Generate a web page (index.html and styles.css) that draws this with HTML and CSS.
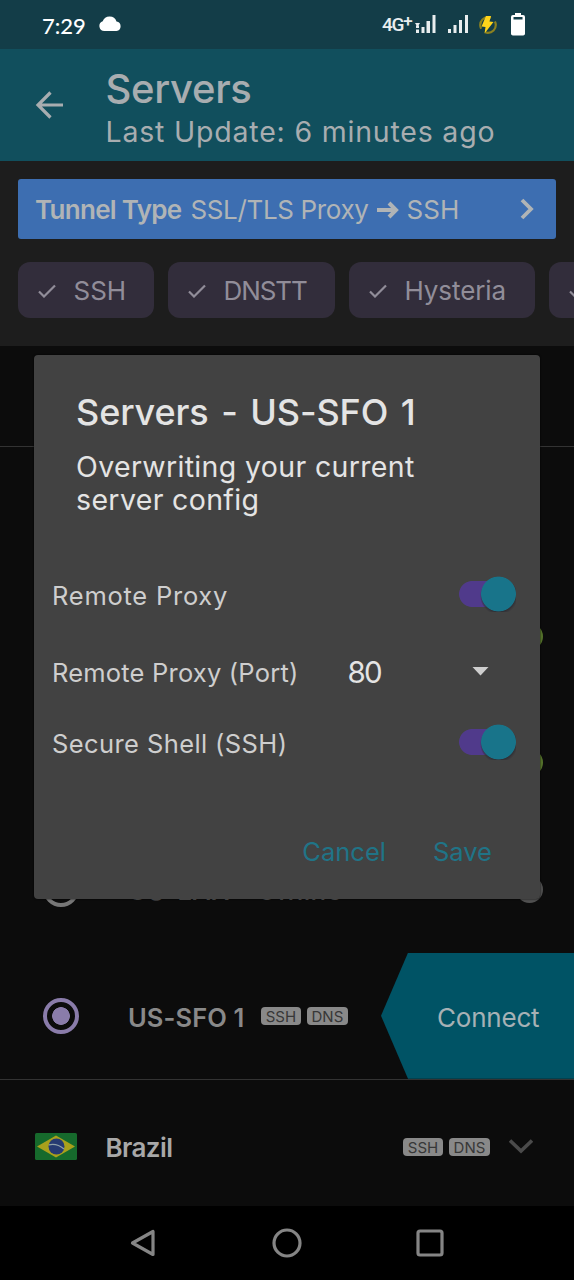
FILE: index.html
```
<!DOCTYPE html>
<html lang="en">
<head>
<meta charset="utf-8">
<title>Servers</title>
<link rel="stylesheet" href="styles.css">
</head>
<body>
<div class="screen">
  <div class="status">
    <span class="time">7:29</span>
    <svg class="cloud" width="22" height="16" viewBox="0 0 22 16"><path fill="#fff" d="M5.500 15A5 5 0 0 1 3.700 5.300A7.300 7.300 0 0 1 17.500 5.500A4.800 4.800 0 0 1 17.500 15Z"/></svg>
    <span class="net">4G<sup>+</sup></span>
    <svg class="sig1" width="22" height="20" viewBox="0 0 22 20" fill="#e9eeef"><path d="M0 8h5L2.500 12zM1 10.500h3v2.500H1zM1 14.500h3v3.500H1zM6.500 12h3v6h-3zM11.500 6h3.500v12h-3.500zM17.500 0h3v18h-3z"/></svg>
    <svg class="sig2" width="21" height="20" viewBox="0 0 21 20" fill="#e9eeef"><path d="M0 14h3v4H0zM5.500 10h3v8h-3zM11 5h3v13h-3zM17 0h3v18h-3z"/></svg>
    <svg class="bolt" width="20" height="20" viewBox="0 0 20 20"><circle cx="10" cy="10" r="7.800" fill="none" stroke="#8b8120" stroke-width="2.200" stroke-dasharray="19 5.500" stroke-dashoffset="4"/><path fill="#ffd51b" d="M8 1h5l-1.500 5.500 4 .5L6.500 18.500l1-6.500-4-.5z"/></svg>
    <svg class="batt" width="14" height="24" viewBox="0 0 14 24"><path fill="#fff" d="M4 0h6v2h2a2 2 0 0 1 2 2v16a2 2 0 0 1-2 2.500H2A2 2 0 0 1 0 20V4a2 2 0 0 1 2-2h2z"/><path fill="#143e49" d="M2.500 4h9v2.500h-9z"/></svg>
  </div>
  <header class="bar">
    <svg class="back" width="30" height="30" viewBox="0 0 30 30" fill="none" stroke="#a8adb0" stroke-width="3.200"><path d="M29 15H4M16.500 2.500L4 15l12.500 12.500"/></svg>
    <div class="heads">
      <div><span class="t-servers">Servers</span></div>
      <div><span class="t-update">Last Update: 6 minutes ago</span></div>
    </div>
  </header>
  <section class="filters">
    <div class="tunnel">
      <b class="t-tunnel">Tunnel Type</b><span class="t-ssl">SSL/TLS Proxy</span>
      <svg class="arrow" width="23" height="18" viewBox="0 0 23 18" fill="none" stroke="#b0b4b6" stroke-width="4"><path d="M0 9h19M12 2L19 9l-7 7"/></svg>
      <span class="t-ssh">SSH</span>
      <svg class="chev" width="14" height="22" viewBox="0 0 14 22" fill="none" stroke="#b0b4b6" stroke-width="3.800"><path d="M2 2l9 9-9 9"/></svg>
    </div>
    <div class="chips">
      <div class="chip c1"><svg width="18" height="14" viewBox="0 0 18 14"><path d="M1 7.500L6 12.500L17 1.500"/></svg><span class="t-c1">SSH</span></div>
      <div class="chip c2"><svg width="18" height="14" viewBox="0 0 18 14"><path d="M1 7.500L6 12.500L17 1.500"/></svg><span class="t-c2">DNSTT</span></div>
      <div class="chip c3"><svg width="18" height="14" viewBox="0 0 18 14"><path d="M1 7.500L6 12.500L17 1.500"/></svg><span class="t-c3">Hysteria</span></div>
      <div class="chip c4"><svg width="18" height="14" viewBox="0 0 18 14"><path d="M1 7.500L6 12.500L17 1.500"/></svg></div>
    </div>
  </section>
  <main class="list">
    <div class="group"></div>
    <div class="row"></div>
    <div class="row"><i class="load"></i></div>
    <div class="row"><i class="load"></i></div>
    <div class="row"><i class="radio"></i><span class="t-lax">US-LAX - Offline</span><i class="load off"></i></div>
    <div class="row">
      <i class="radio on"></i><span class="t-sfo">US-SFO 1</span>
      <span class="tag">SSH</span><span class="tag">DNS</span>
      <div class="connect"><span class="t-conn">Connect</span></div>
    </div>
    <div class="row country">
      <svg class="flag" width="42" height="27" viewBox="0 0 42 27"><rect width="42" height="27" rx="1.500" fill="#166a2c"/><path fill="#a9a01c" d="M2 13.500L21 2.500l19 11-19 11z"/><circle cx="21.500" cy="13.500" r="8" fill="#263a72"/><path d="M14 11.800Q22 10 29 16" fill="none" stroke="#8fa0a8" stroke-width="1.300"/></svg>
      <span class="t-br">Brazil</span>
      <span class="tag first">SSH</span><span class="tag">DNS</span>
      <svg class="down" width="24" height="15" viewBox="0 0 24 15" fill="none" stroke="#4b4b4b" stroke-width="3.600"><path d="M1 1.500L12 12L23 1.500"/></svg>
    </div>
  </main>
  <nav class="nav">
    <svg width="28" height="30" viewBox="0 0 28 30"><path d="M24 3.500v23L3.500 15z"/></svg>
    <svg width="30" height="30" viewBox="0 0 30 30"><circle cx="15" cy="15" r="13"/></svg>
    <svg width="28" height="28" viewBox="0 0 28 28"><rect x="2" y="2" width="24" height="24" rx="2"/></svg>
  </nav>
  <div class="dialog">
    <h1><span class="t-title">Servers - US-SFO 1</span></h1>
    <p><span class="t-over">Overwriting your current</span><br><span class="t-conf">server config</span></p>
    <div class="opt o1"><span class="t-rp">Remote Proxy</span><i class="switch"></i></div>
    <div class="opt o2"><span class="t-port">Remote Proxy (Port)</span><span class="t-80">80</span><i class="caret"></i></div>
    <div class="opt o3"><span class="t-sec">Secure Shell (SSH)</span><i class="switch"></i></div>
    <div class="actions"><span class="t-cancel">Cancel</span><span class="t-save">Save</span></div>
  </div>
</div>
</body>
</html>
```
FILE: styles.css
```
* { box-sizing: border-box; }
body { margin: 0; background: #000; }
span, b { white-space: nowrap; }
svg, i { display: block; flex: none; }
.screen { position: relative; width: 574px; height: 1280px; overflow: hidden; display: flex; flex-direction: column; font-family: Inter, "Noto Sans", sans-serif; }
.status { height: 49px; background: #133d48; display: flex; align-items: center; padding-left: 42px; color: #fff; }
.time { font: 500 22px/30px Lato, sans-serif; width: 57px; padding-top: 2px; }
.cloud { margin-top: -1px; }
.net { font: 500 19px/24px Roboto, sans-serif; margin-left: 261px; width: 33px; letter-spacing: -1.300px; color: #e9eeef; }
.net sup { font-size: 17px; line-height: 0; vertical-align: 4px; }
.sig2 { margin-left: 11px; }
.bolt { margin-left: 9px; }
.batt { margin-left: 13px; }
.bar { height: 112px; background: #114f5d; display: flex; padding-left: 34px; color: #a8adb0; }
.back { margin-top: 41px; }
.heads { margin-left: 41.500px; padding-top: 16px; }
.t-servers { font-size: 40px; line-height: 48px; font-weight: 500; letter-spacing: -.3px; }
.heads div { height: 48px; }
.heads div + div { height: 38px; }
.t-update { font-size: 28.500px; line-height: 38px; letter-spacing: .8px; }
.filters { height: 185px; background: #1d1d1d; padding: 18px 0 0 18px; overflow: hidden; }
.tunnel { width: 538px; height: 60px; background: #3d6eb1; border-radius: 3px; display: flex; align-items: center; padding: 1px 22px 0 17px; font-size: 26px; color: #b0b4b6; }
.tunnel b { font-weight: 600; margin-right: 9px; letter-spacing: -.7px; }
.t-ssl { letter-spacing: -.35px; }
.arrow { margin: 0 7px 0 8px; }
.chev { margin: -2px 0 0 auto; }
.chips { display: flex; gap: 14px; margin-top: 23px; }
.chip { height: 56px; flex: none; border-radius: 12px; background: #322d3b; display: flex; align-items: center; padding-left: 20px; gap: 17.500px; color: #918d99; font-size: 26px; }
.chip svg { fill: none; stroke: #918d99; stroke-width: 2.200; margin-top: 1px; }
.t-c2 { letter-spacing: -1.100px; }
.t-c3 { letter-spacing: -.1px; }
.c1 { width: 136px; }
.c2 { width: 167px; }
.c3 { width: 186px; }
.c4 { width: 120px; }
.list { height: 860px; background: #0c0c0c; }
.group { height: 101px; border-bottom: 1px solid #333; }
.row { height: 126.400px; display: flex; align-items: center; padding-left: 43px; color: #898989; }
.load { width: 27px; height: 27px; margin: 0 31px 0 auto; border-radius: 50%; background: #56742c; }
.load.off { background: #505050; }
.radio { width: 36px; height: 36px; border: 4px solid #777; border-radius: 50%; }
.radio.on { border-color: #8a7caa; background: radial-gradient(circle, #8a7caa 8.500px, transparent 9.200px); }
.t-lax { font-size: 26px; font-weight: 500; margin: 3px 0 0 49px; color: #5a5a5a; letter-spacing: .4px; }
.t-sfo { font-size: 25.500px; font-weight: 600; margin: 3px 16.500px 0 49px; letter-spacing: .1px; }
.tag { width: 40px; height: 18px; border-radius: 4px; background: #898989; color: #373737; font-size: 15px; line-height: 19px; text-align: center; margin-right: 6px; flex: none; }
.tag + .tag { width: 41px; }
.connect { height: 126px; width: 193px; margin-left: auto; background: #005365; clip-path: polygon(27px 0, 100% 0, 100% 100%, 27px 100%, 0 50%); padding: 4px 0 0 56px; display: flex; align-items: center; color: #a6b1b5; font-size: 26px; letter-spacing: -.2px; }
.country { border-top: 1px solid #333; padding: 8px 41px 0 35px; color: #a8a8a8; }
.t-br { font-size: 26px; font-weight: 600; margin: 1px 0 0 28.500px; letter-spacing: -.6px; }
.tag.first { margin-left: auto; }
.down { margin-left: 13px; }
.nav { height: 74px; background: #000; display: flex; align-items: center; padding-left: 129px; gap: 114.500px; }
.nav svg { fill: none; stroke: #858585; stroke-width: 3.200; stroke-linejoin: round; }
.dialog { position: absolute; left: 34px; top: 355px; width: 506px; height: 544px; background: #424242; border-radius: 4px; color: #e4e4e4; box-shadow: 0 0 2px #000; }
.dialog h1 { margin: 0; padding: 34px 0 0 42px; font-size: 36px; line-height: 46px; height: 80px; font-weight: 500; letter-spacing: -.1px; word-spacing: 3px; }
.dialog p { margin: 0; padding: 15px 0 0 42px; font-size: 28.500px; line-height: 33px; height: 123px; letter-spacing: .35px; }
.opt { display: flex; align-items: center; height: 74px; padding: 0 24px 0 18px; font-size: 25.500px; color: #cecece; }
.t-rp { letter-spacing: .75px; }
.t-port { letter-spacing: .2px; }
.t-sec { letter-spacing: .4px; }
.o2 { height: 80px; }
.o3 { height: 63px; }
.switch { width: 57px; height: 36px; margin: -2px 0 0 auto; background: radial-gradient(circle at 39.500px 18px, #18748a 17px, transparent 17.800px), radial-gradient(circle at 40px 20px, #303036 16px, transparent 19px), linear-gradient(#503a8b, #503a8b) 13px 5px / 30px 26px no-repeat, radial-gradient(circle at 13px 18px, #503a8b 12.500px, transparent 13.300px); }
.o3 .switch { margin-top: -3px; }
.t-80 { font: 400 29.500px/36px Inter, sans-serif; color: #e4e4e4; margin-left: 49px; letter-spacing: -1.800px; }
.caret { width: 17px; height: 9px; background: #cecece; clip-path: polygon(0 0, 100% 0, 50% 100%); margin: -2px 27px 0 auto; }
.actions { display: flex; justify-content: flex-end; gap: 47px; padding: 60px 48px 0 0; font-size: 25.500px; line-height: 34px; color: #207487; }
```
